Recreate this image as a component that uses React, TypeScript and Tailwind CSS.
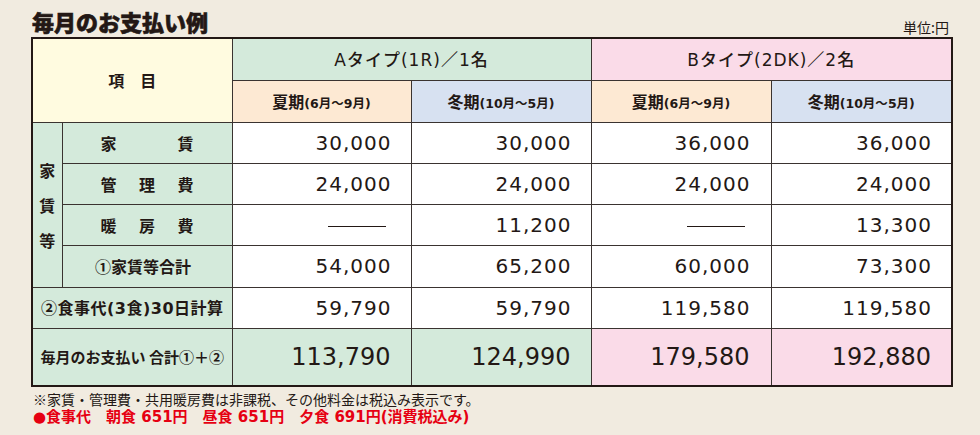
import React from "react";

const JP = "font-['Noto_Sans_CJK_JP','Noto_Sans_CJK_SC',sans-serif]";
const NUM = "font-['DejaVu_Sans','Noto_Sans_CJK_JP',sans-serif]";

const cell = "border border-[#3a3330] p-0";

function L({ children }: { children: React.ReactNode }) {
  return <span className={NUM}>{children}</span>;
}

function Season({ s, p }: { s: string; p: React.ReactNode }) {
  return (
    <span className="font-bold">
      <span className="text-[16px]">{s}</span>
      <span className="text-[12.5px]">{p}</span>
    </span>
  );
}

function Dash() {
  return <span className="inline-block w-[58px] h-px bg-[#231815] align-middle" />;
}

function Val({ v, big, bg = "bg-white", pr = "pr-[19px]" }: { v: React.ReactNode; big?: boolean; bg?: string; pr?: string }) {
  return (
    <td
      className={`${cell} ${bg} ${pr} text-right ${NUM} ${
        big ? "text-[24px]" : "text-[20px] tracking-[1px]"
      } leading-none text-[#231815]`}
    >
      {v}
    </td>
  );
}

function Spread({ chars }: { chars: string[] }) {
  return (
    <div className="mx-auto flex w-[93px] justify-between text-[16px] font-bold">
      {chars.map((c, i) => (
        <span key={i}>{c}</span>
      ))}
    </div>
  );
}

export default function App() {
  const green = "bg-[#d4eadb]";
  const pink = "bg-[#fadbe8]";
  const peach = "bg-[#fde9d3]";
  const blue = "bg-[#d7e1f1]";
  const summer = (
    <>
      <L>(6</L>月〜<L>9</L>月<L>)</L>
    </>
  );
  const winter = (
    <>
      <L>(10</L>月〜<L>5</L>月<L>)</L>
    </>
  );
  return (
    <div className={`w-[980px] h-[435px] bg-[#f1ebe0] ${JP} text-[#231815] px-[31px] pt-[5px]`}>
      <div className="flex items-end justify-between h-[32px] pb-[3px]">
        <h1 className="text-[22px] font-black leading-none pl-px pb-[2px] [-webkit-text-stroke:0.6px_#231815]">
          毎月のお支払い例
        </h1>
        <span className="text-[14px] leading-none">単位:円</span>
      </div>
      <table className="table-fixed border-collapse border-2 border-[#231815] w-[920px]">
        <colgroup>
          <col className="w-[30px]" />
          <col className="w-[170px]" />
          <col className="w-[179px]" />
          <col className="w-[180px]" />
          <col className="w-[180px]" />
          <col className="w-[181px]" />
        </colgroup>
        <tbody>
          <tr className="h-[42px]">
            <td rowSpan={2} colSpan={2} className={`${cell} bg-[#fffbe0] text-center text-[16px] font-bold`}>
              項　目
            </td>
            <td colSpan={2} className={`${cell} ${green} text-center text-[17px] tracking-[1px] font-medium`}>
              <L>A</L>タイプ<L>(1R)</L>／<L>1</L>名
            </td>
            <td colSpan={2} className={`${cell} ${pink} text-center text-[17px] tracking-[1px] font-medium`}>
              <L>B</L>タイプ<L>(2DK)</L>／<L>2</L>名
            </td>
          </tr>
          <tr className="h-[42px]">
            <td className={`${cell} ${peach} text-center`}>
              <Season s="夏期" p={summer} />
            </td>
            <td className={`${cell} ${blue} text-center`}>
              <Season s="冬期" p={winter} />
            </td>
            <td className={`${cell} ${peach} text-center`}>
              <Season s="夏期" p={summer} />
            </td>
            <td className={`${cell} ${blue} text-center`}>
              <Season s="冬期" p={winter} />
            </td>
          </tr>
          <tr className="h-[41px]">
            <td rowSpan={4} className={`${cell} ${green}`}>
              <div className="flex flex-col items-center gap-[19px] text-[16px] font-bold leading-none">
                <span>家</span>
                <span>賃</span>
                <span>等</span>
              </div>
            </td>
            <td className={`${cell} ${green}`}>
              <Spread chars={["家", "賃"]} />
            </td>
            <Val v="30,000" />
            <Val v="30,000" />
            <Val v="36,000" pr="pr-[20px]" />
            <Val v="36,000" />
          </tr>
          <tr className="h-[41px]">
            <td className={`${cell} ${green}`}>
              <Spread chars={["管", "理", "費"]} />
            </td>
            <Val v="24,000" />
            <Val v="24,000" />
            <Val v="24,000" pr="pr-[20px]" />
            <Val v="24,000" />
          </tr>
          <tr className="h-[41px]">
            <td className={`${cell} ${green}`}>
              <Spread chars={["暖", "房", "費"]} />
            </td>
            <Val v={<Dash />} pr="pr-[25px]" />
            <Val v="11,200" />
            <Val v={<Dash />} pr="pr-[26px]" />
            <Val v="13,300" />
          </tr>
          <tr className="h-[42px]">
            <td className={`${cell} ${green} text-center text-[16px] font-bold pr-[8px]`}>①家賃等合計</td>
            <Val v="54,000" />
            <Val v="65,200" />
            <Val v="60,000" pr="pr-[20px]" />
            <Val v="73,300" />
          </tr>
          <tr className="h-[41px]">
            <td colSpan={2} className={`${cell} ${green} text-center text-[16px] font-bold tracking-[0.5px]`}>
              ②食事代<L>(3</L>食<L>)30</L>日計算
            </td>
            <Val v="59,790" />
            <Val v="59,790" />
            <Val v="119,580" pr="pr-[20px]" />
            <Val v="119,580" />
          </tr>
          <tr className="h-[58px]">
            <td colSpan={2} className={`${cell} ${green} text-center text-[15px] font-bold`}>
              毎月のお支払い 合計①＋②
            </td>
            <Val v="113,790" big bg={green} pr="pr-[20px]" />
            <Val v="124,990" big bg={green} pr="pr-[20px]" />
            <Val v="179,580" big bg={pink} pr="pr-[21px]" />
            <Val v="192,880" big bg={pink} pr="pr-[20px]" />
          </tr>
        </tbody>
      </table>
      <div className="pt-[3px] pl-[2px]">
        <p className="text-[14px] leading-[18px]">※家賃・管理費・共用暖房費は非課税、その他料金は税込み表示です。</p>
        <p className="text-[15px] leading-[18px] font-bold text-[#e60012] font-['DejaVu_Sans','Noto_Sans_CJK_JP',sans-serif]">
          ●食事代　朝食 651円　昼食 651円　夕食 691円(消費税込み)
        </p>
      </div>
    </div>
  );
}
